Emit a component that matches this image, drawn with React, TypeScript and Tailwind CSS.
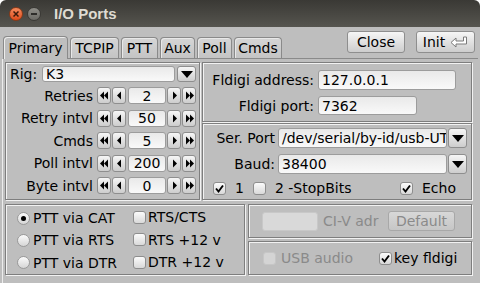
import React from 'react';

const engraved = 'border border-[#7e7e7e] shadow-[inset_1px_1px_0_#f2f2f2,1px_1px_0_#f2f2f2]';
const plastic = 'border border-[#8e8e8e] rounded-[3px] bg-linear-to-b from-[#f6f6f6] to-[#cdcdcd]';
const field = 'border border-[#9c9c9c] rounded-[3px] bg-linear-to-b from-[#e9e9e9] to-[#f9f9f9]';

function Arrow({ dir, double }: { dir: 'l' | 'r'; double?: boolean }) {
  const left = double ? ['4,0.5 4,8.5 0,4.5', '8,0.5 8,8.5 4,4.5'] : ['6,0.5 6,8.5 2,4.5'];
  const right = double ? ['1,0.5 1,8.5 5,4.5', '5,0.5 5,8.5 9,4.5'] : ['3,0.5 3,8.5 7,4.5'];
  return (
    <svg width="9" height="9" viewBox="0 0 9 9">
      {(dir === 'l' ? left : right).map((p) => (
        <polygon key={p} points={p} fill="#000" />
      ))}
    </svg>
  );
}

function DropBtn({ h }: { h: string }) {
  return (
    <div className={`${plastic} w-[19px] ${h} flex items-center justify-center`}>
      <svg width="12" height="7" viewBox="0 0 12 7">
        <polygon points="0,0 12,0 6,7" fill="#000" />
      </svg>
    </div>
  );
}

function Spinner({ label, value }: { label: string; value: string }) {
  return (
    <div className="flex items-center h-[17px]">
      <div className="w-[91px] pr-[4px] text-right leading-none">{label}</div>
      <div className={`${plastic} w-[14px] h-[17px] flex items-center justify-center`}><Arrow dir="l" double /></div>
      <div className={`${plastic} ml-px w-[14px] h-[17px] flex items-center justify-center`}><Arrow dir="l" /></div>
      <div className={`${field} ml-[2px] w-[38px] h-[17px] flex items-center justify-center leading-none`}>{value}</div>
      <div className={`${plastic} ml-px w-[14px] h-[17px] flex items-center justify-center`}><Arrow dir="r" /></div>
      <div className={`${plastic} ml-px w-[14px] h-[17px] flex items-center justify-center`}><Arrow dir="r" double /></div>
    </div>
  );
}

function Check({ on, disabled }: { on?: boolean; disabled?: boolean }) {
  return (
    <span
      className={`w-[13px] h-[13px] rounded-[3px] border flex items-center justify-center ${
        disabled ? 'border-[#c6c6c6] bg-[#d4d4d4]' : 'border-[#8e8e8e] bg-linear-to-b from-[#fbfbfb] to-[#d9d9d9]'
      }`}
    >
      {on && (
        <svg width="11" height="11" viewBox="0 0 11 11">
          <path d="M2 5.5 L4.5 8.5 L9 2.5" stroke="#000" strokeWidth="1.9" fill="none" />
        </svg>
      )}
    </span>
  );
}

function Radio({ on }: { on?: boolean }) {
  return (
    <span className="w-[13px] h-[13px] rounded-full border border-[#9a9a9a] bg-linear-to-b from-[#fbfbfb] to-[#d6d6d6] flex items-center justify-center">
      {on && <span className="w-[5px] h-[5px] rounded-full bg-black" />}
    </span>
  );
}

const tabs = [
  { name: 'Primary', w: 'w-[65px]' },
  { name: 'TCPIP', w: 'w-[49px]' },
  { name: 'PTT', w: 'w-[37px]' },
  { name: 'Aux', w: 'w-[35px]' },
  { name: 'Poll', w: 'w-[35px]' },
  { name: 'Cmds', w: 'w-[48px]' },
];

export default function App() {
  return (
    <div className="w-[480px] h-[283px] overflow-hidden bg-white font-['DejaVu_Sans',sans-serif] text-[14px] text-black">
      {/* title bar */}
      <div className="h-[27px] rounded-t-[6px] bg-linear-to-b from-[#3a3935] to-[#56554f] flex items-center pl-[9px]">
        <div className="w-[14px] h-[14px] rounded-full bg-linear-to-b from-[#f58a5c] to-[#de4a17] border border-[#8a3a18] flex items-center justify-center">
          <svg width="6" height="6" viewBox="0 0 6 6">
            <path d="M0.5 0.5 L5.5 5.5 M5.5 0.5 L0.5 5.5" stroke="#3b1a0a" strokeWidth="1.5" />
          </svg>
        </div>
        <div className="ml-[4px] w-[14px] h-[14px] rounded-full bg-linear-to-b from-[#8f8e88] to-[#6c6b66] border border-[#3a3935] flex items-center justify-center">
          <div className="w-[6px] h-[2px] bg-[#2e2d2a]" />
        </div>
        <div className="ml-[13px] font-['Liberation_Sans',sans-serif] font-bold text-[15px] text-[#dfdbd2] leading-none">
          I/O Ports
        </div>
      </div>

      <div className="h-[256px] bg-[#bebebe] flex flex-col">
        {/* tabs + buttons */}
        <div className="h-[31px] flex items-end pl-[3px] pr-[5px] shrink-0">
          <div className="flex items-end gap-[2px]">
            {tabs.map((t, i) => (
              <div
                key={t.name}
                className={`${t.w} flex items-center justify-center leading-none border border-[#8a8a8a] rounded-t-[4px] ${
                  i === 0
                    ? 'h-[23px] border-b-0 bg-[#bebebe] relative z-10 -mb-px shadow-[inset_1px_1px_0_#ececec]'
                    : 'h-[21px] border-b-0 bg-linear-to-b from-[#d6d6d6] to-[#c4c4c4] shadow-[inset_1px_1px_0_#e8e8e8]'
                }`}
              >
                {t.name}
              </div>
            ))}
          </div>
          <div className="ml-auto self-start mt-[4px] flex gap-[11px]">
            <div className={`${plastic} w-[58px] h-[22px] flex items-center justify-center leading-none`}>Close</div>
            <div className={`${plastic} w-[59px] h-[22px] flex items-center justify-center gap-[5px] leading-none`}>
              <span>Init</span>
              <svg width="18" height="12" viewBox="0 0 18 12">
                <polygon points="13.5,1 16.5,1 16.5,8 6,8 6,11 1,6.5 6,2 6,5 13.5,5" fill="#fff" stroke="#7a7a7a" strokeWidth="1" />
              </svg>
            </div>
          </div>
        </div>

        {/* tab page */}
        <div className="flex-1 mx-[2px] border-t border-l border-t-[#8a8a8a] border-l-[#ececec] pl-[2px] pt-[3px]">
          {/* row 1 */}
          <div className="flex h-[138px]">
            <div className={`${engraved} w-[195px] pt-[3px] flex flex-col`}>
              <div className="flex items-center h-[16px]">
                <div className="w-[36px] pl-[4px] leading-none">Rig:</div>
                <div className={`${field} w-[133px] h-[16px] flex items-center pl-[3px] leading-none`}>K3</div>
                <div className="ml-[2px]">
                  <DropBtn h="h-[16px]" />
                </div>
              </div>
              <div className="mt-[5px] flex flex-col gap-[5.5px]">
                <Spinner label="Retries" value="2" />
                <Spinner label="Retry intvl" value="50" />
                <Spinner label="Cmds" value="5" />
                <Spinner label="Poll intvl" value="200" />
                <Spinner label="Byte intvl" value="0" />
              </div>
            </div>

            <div className="ml-[2px] w-[270px] flex flex-col gap-px">
              <div className={`${engraved} h-[60px] pt-[7px] flex flex-col gap-[6px]`}>
                <div className="flex items-center">
                  <div className="w-[115px] pr-[4px] text-right leading-none">Fldigi address:</div>
                  <div className={`${field} w-[138px] h-[20px] flex items-center pl-[3px] leading-none`}>127.0.0.1</div>
                </div>
                <div className="flex items-center">
                  <div className="w-[115px] pr-[4px] text-right leading-none">Fldigi port:</div>
                  <div className={`${field} w-[99px] h-[19px] flex items-center pl-[3px] leading-none`}>7362</div>
                </div>
              </div>
              <div className={`${engraved} h-[77px] pt-[4px] flex flex-col`}>
                <div className="flex items-center">
                  <div className="w-[75px] pr-[3px] text-right leading-none">Ser. Port</div>
                  <div className={`${field} w-[169px] h-[20px] flex items-center pl-[3px] leading-none overflow-hidden whitespace-nowrap`}>
                    /dev/serial/by-id/usb-UTF
                  </div>
                  <div className="ml-px">
                    <DropBtn h="h-[20px]" />
                  </div>
                </div>
                <div className="flex items-center mt-[6px]">
                  <div className="w-[75px] pr-[3px] text-right leading-none">Baud:</div>
                  <div className={`${field} w-[169px] h-[20px] flex items-center pl-[3px] leading-none`}>38400</div>
                  <div className="ml-px">
                    <DropBtn h="h-[20px]" />
                  </div>
                </div>
                <div className="flex items-center mt-[7px] pl-[10px] pr-[15px] leading-none">
                  <Check on />
                  <span className="ml-[9px]">1</span>
                  <span className="ml-[9px]"><Check /></span>
                  <span className="ml-[9px]">2 -StopBits</span>
                  <span className="ml-auto"><Check on /></span>
                  <span className="ml-[9px]">Echo</span>
                </div>
              </div>
            </div>
          </div>

          {/* row 2 */}
          <div className="flex mt-[4px] h-[71px]">
            <div className={`${engraved} w-[240px] flex pt-[2px] pl-[11px]`}>
              <div className="w-[116px] flex flex-col">
                {['PTT via CAT', 'PTT via RTS', 'PTT via DTR'].map((l, i) => (
                  <div key={l} className="h-[23px] flex items-center leading-none">
                    <Radio on={i === 0} />
                    <span className="ml-[3px]">{l}</span>
                  </div>
                ))}
              </div>
              <div className="flex flex-col -mt-[1px]">
                {['RTS/CTS', 'RTS +12 v', 'DTR +12 v'].map((l) => (
                  <div key={l} className="h-[22.5px] flex items-center leading-none">
                    <Check />
                    <span className="ml-[2px]">{l}</span>
                  </div>
                ))}
              </div>
            </div>

            <div className="ml-[3px] w-[224px] flex flex-col gap-[3px]">
              <div className={`${engraved} h-[34px] flex items-center pl-[13px] leading-none text-[#8a8a8a]`}>
                <div className="w-[56px] h-[19px] rounded-[3px] border border-[#c8c8c8] bg-[#d9d9d9]" />
                <span className="ml-[5px] w-[60px]">CI-V adr</span>
                <div className="ml-[5px] w-[67px] h-[20px] rounded-[3px] border border-[#a8a8a8] bg-linear-to-b from-[#d8d8d8] to-[#c6c6c6] flex items-center justify-center">
                  Default
                </div>
              </div>
              <div className={`${engraved} h-[34px] flex items-center pl-[14px] leading-none`}>
                <Check disabled />
                <span className="ml-[5px] text-[#8a8a8a] w-[73px]">USB audio</span>
                <span className="ml-[25px]"><Check on /></span>
                <span className="ml-[2px]">key fldigi</span>
              </div>
            </div>
          </div>
        </div>
      </div>
    </div>
  );
}
